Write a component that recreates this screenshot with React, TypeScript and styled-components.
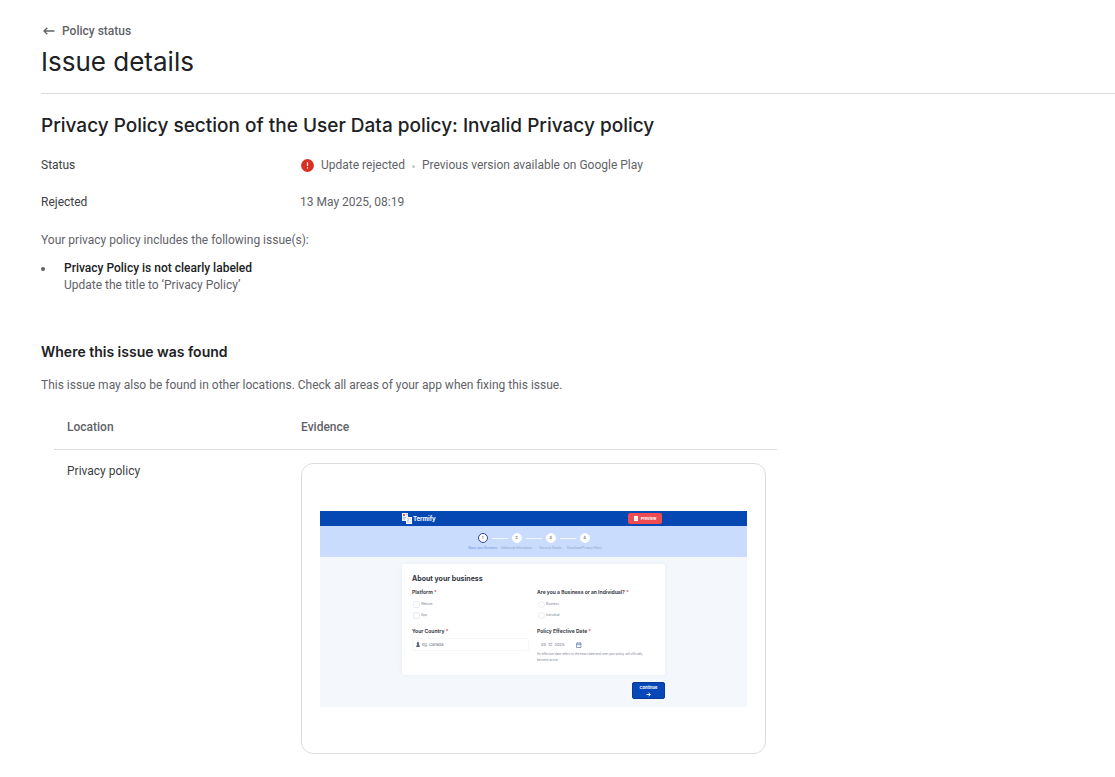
import React from 'react';
import styled, { createGlobalStyle } from 'styled-components';

const display = '"Google Sans", Inter, Roboto, sans-serif';
const body = 'Roboto, "Liberation Sans", sans-serif';
const preview = 'Inter, Roboto, sans-serif';

const GlobalStyle = createGlobalStyle`
  *, *::before, *::after { box-sizing: border-box; }
  body {
    margin: 0;
    background: #fff;
    color: #5f6368;
    font: 12px/18px ${body};
  }
  h1, h2, h3, p, ul, dl, dd { margin: 0; padding: 0; }
`;

const Page = styled.main`
  padding: 22px 0 24px 41px;
`;

const Header = styled.header`
  padding-bottom: 13px;
  border-bottom: 1px solid #dadce0;
`;

const BackLink = styled.a`
  display: flex;
  align-items: center;
  gap: 6px;
  width: fit-content;
  color: #5f6368;
  font: 500 12px/18px ${body};
  text-decoration: none;
`;

const Title = styled.h1`
  margin-top: 4px;
  color: #202124;
  font: 400 26px/36px ${display};
`;

const PolicyName = styled.h2`
  margin-top: 19px;
  color: #202124;
  font: 500 19px/26px ${display};
`;

const Facts = styled.dl`
  display: grid;
  grid-template-columns: 259px 1fr;
  row-gap: 19px;
  margin-top: 17px;
`;

const Term = styled.dt`
  color: #3c4043;
`;

const Value = styled.dd`
  display: flex;
  align-items: center;
`;

const StatusIcon = styled.svg`
  margin: 0 7px 0 1px;
`;

const Separator = styled.span`
  width: 3px;
  height: 3px;
  margin: 2px 7px 0;
  border-radius: 50%;
  background: #c8cbcf;
`;

const Intro = styled.p`
  margin-top: 20px;
`;

const Issues = styled.ul`
  margin-top: 11px;
  list-style: none;
`;

const Issue = styled.li`
  display: grid;
  grid-template-columns: 23px 1fr;
  line-height: 17px;
`;

const Bullet = styled.span`
  width: 4px;
  height: 4px;
  margin-top: 7px;
  border-radius: 50%;
  background: #5f6368;
`;

const IssueName = styled.strong`
  display: block;
  color: #202124;
  font-weight: 500;
`;

const SectionTitle = styled.h3`
  margin-top: 46px;
  color: #202124;
  font: 600 14px/24px ${display};
`;

const Note = styled.p`
  margin-top: 12px;
`;

const Table = styled.table`
  width: calc(100% - 26px);
  max-width: 723px;
  margin: 10px 13px 0;
  border-collapse: collapse;
  table-layout: fixed;
`;

const HeadCell = styled.th<{ $width?: number }>`
  width: ${({ $width }) => ($width ? `${$width}px` : 'auto')};
  padding: 14px 11px 13px 0;
  border-bottom: 1px solid #dadce0;
  color: #5f6368;
  font: 500 12px/18px ${body};
  text-align: left;
  &:first-child { padding-left: 13px; }
`;

const Cell = styled.td`
  padding: 13px 11px 0 0;
  color: #3c4043;
  vertical-align: top;
  &:first-child { padding: 12px 0 0 13px; }
`;

const Evidence = styled.figure`
  margin: 0;
  padding: 47px 18px 46px;
  border: 1px solid #dadce0;
  border-radius: 12px;
`;

/* Miniature of the app's policy page shown as evidence */
const Shot = styled.div`
  background: #f4f8fc;
  color: #30353f;
  font: 3px/6px ${preview};
`;

const ShotBar = styled.div`
  display: flex;
  align-items: center;
  justify-content: space-between;
  height: 15px;
  padding: 0 85px 0 82px;
  background: #0648b3;
`;

const Brand = styled.span`
  display: flex;
  align-items: center;
  gap: 1px;
  color: #fff;
  font: 700 6px/10px ${preview};
`;

const PreviewButton = styled.button`
  display: flex;
  align-items: center;
  justify-content: center;
  gap: 3px;
  width: 34px;
  height: 11px;
  padding: 0;
  border: 0;
  border-radius: 2px;
  background: #ee4b52;
  color: #fff;
  font: 700 4px/6px ${preview};
`;

const Steps = styled.ol`
  display: flex;
  justify-content: center;
  height: 31px;
  margin: 0;
  padding: 7px 0 0;
  background: #c9dcfe;
  list-style: none;
`;

const Step = styled.li<{ $active?: boolean }>`
  display: flex;
  flex-direction: column;
  align-items: center;
  gap: 2px;
  width: 34px;
  color: ${({ $active }) => ($active ? '#6c8fdc' : '#8f9fc4')};
  white-space: nowrap;
`;

const StepTrack = styled.span`
  display: grid;
  grid-template-columns: 1fr 10px 1fr;
  align-items: center;
  gap: 4px;
  width: 100%;
`;

const StepLine = styled.span<{ $shown: boolean }>`
  height: 1px;
  background: ${({ $shown }) => ($shown ? '#f3f7ff' : 'transparent')};
`;

const StepDot = styled.span<{ $active?: boolean }>`
  height: 10px;
  border: 1px solid ${({ $active }) => ($active ? '#2a4a9c' : '#fff')};
  border-radius: 50%;
  background: #fff;
  color: #6b7386;
  font: 600 4px/8px ${preview};
  text-align: center;
`;

const ShotBody = styled.div`
  display: flex;
  flex-direction: column;
  align-items: flex-end;
  gap: 7px;
  padding: 7px 82px 8px;
`;

const FormCard = styled.form`
  width: 100%;
  min-height: 111px;
  padding: 10px 10px 0;
  border-radius: 2px;
  background: #fff;
  box-shadow: 0 0 4px #e6ecf3;
`;

const FormTitle = styled.div`
  color: #30353f;
  font: 700 7px/10px ${preview};
`;

const FormGrid = styled.div`
  display: grid;
  grid-template-columns: 117px 1fr;
  column-gap: 8px;
  row-gap: 8px;
  margin-top: 4px;
`;

const Field = styled.fieldset`
  min-width: 0;
  margin: 0;
  padding: 0;
  border: 0;
`;

const FieldLabel = styled.div`
  display: block;
  color: #3c414b;
  font: 700 5px/9px ${preview};
  white-space: nowrap;
`;

const Required = styled.span`
  color: #e5484d;
`;

const Choice = styled.label`
  display: flex;
  align-items: center;
  gap: 1px;
  height: 8px;
  margin: 3px 0 0 1px;
  color: #777f8c;
`;

const ChoiceInput = styled.input`
  appearance: none;
  width: 7px;
  height: 7px;
  margin: 0;
  border: 1px solid #e9ecf0;
  border-radius: ${({ type }) => (type === 'radio' ? '50%' : '2px')};
  background: #fff;
`;

const InputBox = styled.div<{ $outlined?: boolean }>`
  display: flex;
  align-items: center;
  gap: 2px;
  height: 13px;
  margin-top: 2px;
  padding: 0 3px;
  border: 1px solid ${({ $outlined }) => ($outlined ? '#f6f7f9' : 'transparent')};
  border-radius: 2px;
`;

const TextInput = styled.input<{ $width: number }>`
  width: ${({ $width }) => $width}px;
  height: 8px;
  padding: 0;
  border: 0;
  background: none;
  color: #6b7280;
  font: 4px/8px ${preview};
  &::placeholder { color: #6b7280; }
`;

const Help = styled.p`
  padding-right: 8px;
  color: #7d8592;
`;

const ContinueButton = styled.button`
  display: flex;
  flex-direction: column;
  align-items: center;
  justify-content: center;
  gap: 1px;
  width: 33px;
  height: 17px;
  padding: 0;
  border: 1px solid #0a3a96;
  border-radius: 2px;
  background: #0648b8;
  color: #fff;
  font: 700 4px/6px ${preview};
`;

const steps = ['About your Business', 'Additional Information', 'Security Details', 'Download Privacy Policy'];

function Choices({ type, name, options }: { type: 'checkbox' | 'radio'; name: string; options: string[] }) {
  return (
    <>
      {options.map((option) => (
        <Choice key={option}>
          <ChoiceInput type={type} name={name} />
          {option}
        </Choice>
      ))}
    </>
  );
}

function PolicyPageShot() {
  return (
    <Shot>
      <ShotBar>
        <Brand>
          <svg width="10" height="11" viewBox="0 0 10 11" aria-hidden="true">
            <path d="M0 0h6v8H0z" fill="#eef2fb" />
            <path d="M1 1h2v2H1z" fill="#d9566b" />
            <path d="M4 1.5h1.500M1 4.500h3M1 6h2" stroke="#8093bd" strokeWidth=".6" />
            <path d="M4 4h6v7H4z" fill="#fff" />
            <path d="M5 5.500h1.500v2H5M7.500 6h1.500M5 9h4" stroke="#8ea3cf" strokeWidth=".6" fill="none" />
          </svg>
          Termify
        </Brand>
        <PreviewButton type="button">
          <svg width="4" height="5" viewBox="0 0 4 5" aria-hidden="true">
            <rect width="4" height="5" rx=".6" fill="#fff" />
            <path d="M1 2h2M1 3.300h2" stroke="#f3a0a4" strokeWidth=".4" />
          </svg>
          Preview
        </PreviewButton>
      </ShotBar>
      <Steps>
        {steps.map((label, i) => (
          <Step key={label} $active={i === 0}>
            <StepTrack>
              <StepLine $shown={i > 0} />
              <StepDot $active={i === 0}>{i + 1}</StepDot>
              <StepLine $shown={i < steps.length - 1} />
            </StepTrack>
            {label}
          </Step>
        ))}
      </Steps>
      <ShotBody>
        <FormCard>
          <FormTitle>About your business</FormTitle>
          <FormGrid>
            <Field>
              <FieldLabel>Platform <Required>*</Required></FieldLabel>
              <Choices type="checkbox" name="platform" options={['Website', 'App']} />
            </Field>
            <Field>
              <FieldLabel>Are you a Business or an Individual? <Required>*</Required></FieldLabel>
              <Choices type="radio" name="entity" options={['Business', 'Individual']} />
            </Field>
            <Field>
              <FieldLabel as="label" htmlFor="country">Your Country <Required>*</Required></FieldLabel>
              <InputBox $outlined>
                <svg width="4" height="5" viewBox="0 0 4 5" aria-hidden="true">
                  <path d="M2 0a1.200 1.200 0 0 1 .8 2.100L4 5H0l1.200-2.900A1.200 1.200 0 0 1 2 0z" fill="#5b6675" />
                </svg>
                <TextInput id="country" $width={80} placeholder="eg. Canada" />
              </InputBox>
            </Field>
            <Field>
              <FieldLabel as="label" htmlFor="effective">Policy Effective Date <Required>*</Required></FieldLabel>
              <InputBox>
                <TextInput id="effective" $width={33} defaultValue={'05 \u00a012 \u00a02025'} />
                <svg width="6" height="6" viewBox="0 0 6 6" aria-hidden="true">
                  <path d="M.5 1.200h4.500v4.300H.5zM.5 2.600h4.500M1.600 0v1.200M3.900 0v1.200" fill="none" stroke="#5b7fae" strokeWidth=".7" />
                </svg>
              </InputBox>
              <Help>An effective date refers to the exact date and time your policy will officially become active.</Help>
            </Field>
          </FormGrid>
        </FormCard>
        <ContinueButton type="button">
          Continue
          <svg width="5" height="5" viewBox="0 0 5 5" aria-hidden="true">
            <path d="M.5 2.500h3.500M2.500 .7L4.300 2.500 2.500 4.300" fill="none" stroke="#fff" strokeWidth=".9" />
          </svg>
        </ContinueButton>
      </ShotBody>
    </Shot>
  );
}

export default function App() {
  return (
    <>
      <GlobalStyle />
      <Page>
        <Header>
          <BackLink href="#policy-status">
            <svg width="15" height="12" viewBox="0 0 15 12" aria-hidden="true">
              <path d="M13.500 6H3M6.300 2.700L3 6l3.300 3.300" fill="none" stroke="#5f6368" strokeWidth="1.300" />
            </svg>
            Policy status
          </BackLink>
          <Title>Issue details</Title>
        </Header>
        <PolicyName>Privacy Policy section of the User Data policy: Invalid Privacy policy</PolicyName>
        <Facts>
          <Term>Status</Term>
          <Value>
            <StatusIcon width="13" height="13" viewBox="0 0 13 13" aria-hidden="true">
              <circle cx="6.500" cy="6.500" r="6.400" fill="#d93025" />
              <path d="M6.500 3.300v3.700M6.500 8.300v1.300" stroke="#fff" strokeWidth="1.200" />
            </StatusIcon>
            Update rejected
            <Separator />
            Previous version available on Google Play
          </Value>
          <Term>Rejected</Term>
          <Value>13 May 2025, 08:19</Value>
        </Facts>
        <Intro>Your privacy policy includes the following issue(s):</Intro>
        <Issues>
          <Issue>
            <Bullet />
            <div>
              <IssueName>Privacy Policy is not clearly labeled</IssueName>
              Update the title to ‘Privacy Policy’
            </div>
          </Issue>
        </Issues>
        <SectionTitle>Where this issue was found</SectionTitle>
        <Note>This issue may also be found in other locations. Check all areas of your app when fixing this issue.</Note>
        <Table>
          <thead>
            <tr>
              <HeadCell scope="col" $width={247}>Location</HeadCell>
              <HeadCell scope="col">Evidence</HeadCell>
            </tr>
          </thead>
          <tbody>
            <tr>
              <Cell>Privacy policy</Cell>
              <Cell>
                <Evidence>
                  <PolicyPageShot />
                </Evidence>
              </Cell>
            </tr>
          </tbody>
        </Table>
      </Page>
    </>
  );
}
